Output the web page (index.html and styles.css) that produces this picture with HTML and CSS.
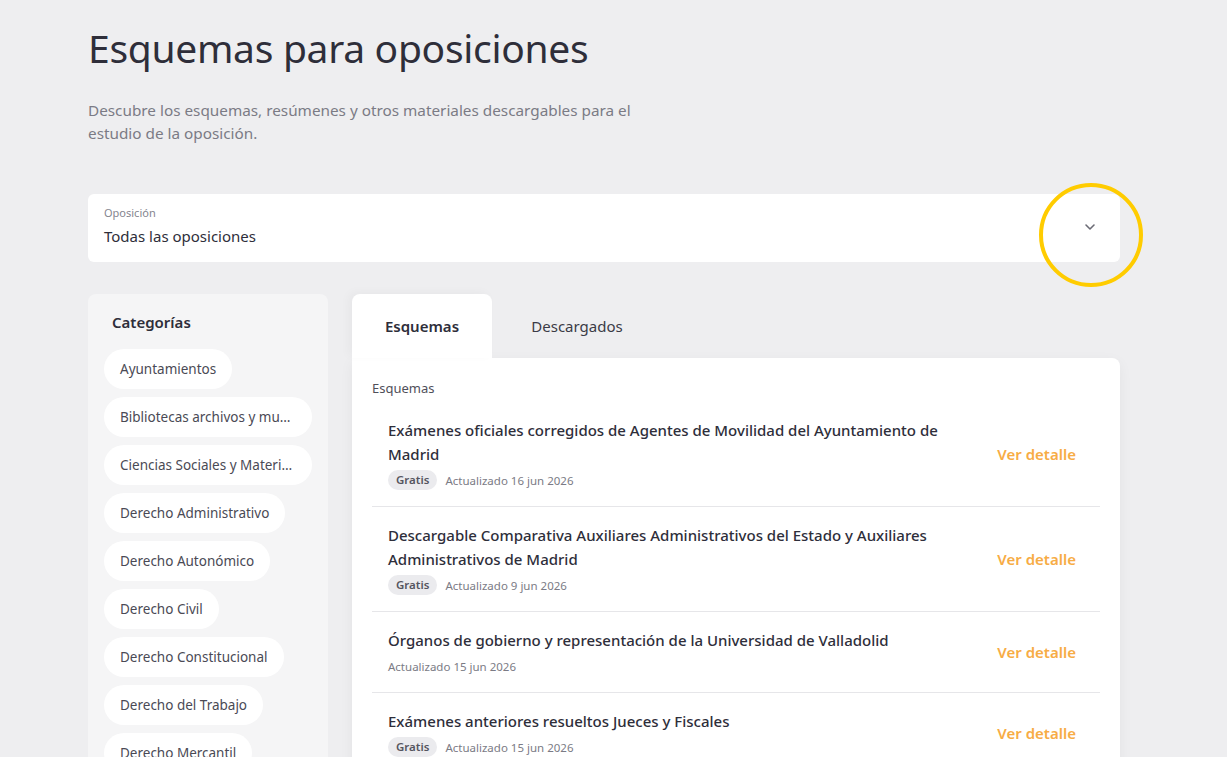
FILE: index.html
```html
<!DOCTYPE html>
<html lang="es">
<head>
  <meta charset="UTF-8">
  <title>Esquemas para oposiciones</title>
  <link rel="stylesheet" href="styles.css">
</head>
<body>
  <div class="page">
    <header class="page-header">
      <h1>Esquemas para oposiciones</h1>
      <p class="intro">Descubre los esquemas, resúmenes y otros materiales descargables para el estudio de la oposición.</p>
    </header>

    <div class="select-box">
      <div class="select-text">
        <span class="select-label">Oposición</span>
        <span class="select-value">Todas las oposiciones</span>
      </div>
      <svg class="chevron" width="12" height="8" viewBox="0 0 12 8">
        <path d="M2 2 L6 6 L10 2" fill="none" stroke="#6b6b75" stroke-width="1.6" stroke-linecap="round" stroke-linejoin="round"/>
      </svg>
      <span class="highlight-ring"></span>
    </div>

    <div class="main">
      <aside class="categories">
        <h3>Categorías</h3>
        <ul class="chips">
          <li class="chip">Ayuntamientos</li>
          <li class="chip">Bibliotecas archivos y museos</li>
          <li class="chip">Ciencias Sociales y Materias afines</li>
          <li class="chip">Derecho Administrativo</li>
          <li class="chip">Derecho Autonómico</li>
          <li class="chip">Derecho Civil</li>
          <li class="chip">Derecho Constitucional</li>
          <li class="chip">Derecho del Trabajo</li>
          <li class="chip">Derecho Mercantil</li>
        </ul>
      </aside>

      <section class="content">
        <div class="tabs">
          <div class="tab active">Esquemas</div>
          <div class="tab">Descargados</div>
        </div>
        <div class="panel">
          <div class="panel-title">Esquemas</div>
          <ul class="items">
            <li class="item">
              <div class="item-info">
                <div class="item-title">Exámenes oficiales corregidos de Agentes de Movilidad del Ayuntamiento de Madrid</div>
                <div class="item-meta"><span class="badge">Gratis</span><span>Actualizado 16 jun 2026</span></div>
              </div>
              <a class="item-link" href="#">Ver detalle</a>
            </li>
            <li class="item">
              <div class="item-info">
                <div class="item-title">Descargable Comparativa Auxiliares Administrativos del Estado y Auxiliares Administrativos de Madrid</div>
                <div class="item-meta"><span class="badge">Gratis</span><span>Actualizado 9 jun 2026</span></div>
              </div>
              <a class="item-link" href="#">Ver detalle</a>
            </li>
            <li class="item">
              <div class="item-info">
                <div class="item-title">Órganos de gobierno y representación de la Universidad de Valladolid</div>
                <div class="item-meta"><span class="date-only">Actualizado 15 jun 2026</span></div>
              </div>
              <a class="item-link" href="#">Ver detalle</a>
            </li>
            <li class="item">
              <div class="item-info">
                <div class="item-title">Exámenes anteriores resueltos Jueces y Fiscales</div>
                <div class="item-meta"><span class="badge">Gratis</span><span>Actualizado 15 jun 2026</span></div>
              </div>
              <a class="item-link" href="#">Ver detalle</a>
            </li>
          </ul>
        </div>
      </section>
    </div>
  </div>
</body>
</html>
```

FILE: styles.css
```css
:root {
  --bg-color: #eeeef0;
  --text-color: #2e2e3a;
  --muted-color: #7b7b85;
  --border-color: #e6e6e9;
  --accent: #f7ac45;
}

body {
  font-family: "Noto Sans", "Open Sans", sans-serif;
  background-color: var(--bg-color);
  color: var(--text-color);
  margin: 0;
  height: 757px;
  overflow: hidden;
}

.page {
  width: 1032px;
  margin-left: 88px;
}

.page-header h1 {
  font-size: 39px;
  font-weight: 400;
  margin: 23px 0 0;
  line-height: 50px;
  letter-spacing: -0.3px;
}

.intro {
  width: 570px;
  margin: 26px 0 0;
  font-size: 15.3px;
  line-height: 23px;
  color: var(--muted-color);
}

.select-box {
  position: relative;
  margin-top: 49px;
  height: 68px;
  background: #fff;
  border-radius: 6px;
  display: flex;
  align-items: center;
  justify-content: space-between;
  padding: 0 24px 0 16px;
  box-sizing: border-box;
}

.select-text {
  display: flex;
  flex-direction: column;
  margin-top: -3px;
}

.select-label {
  font-size: 11px;
  color: #85858f;
  line-height: 14px;
}

.select-value {
  font-size: 15px;
  line-height: 22px;
  margin-top: 5px;
}

.chevron {
  margin-top: -2px;
}

.highlight-ring {
  position: absolute;
  right: -23px;
  top: -11px;
  width: 96px;
  height: 96px;
  border: 4px solid #ffcc00;
  border-radius: 50%;
}

.main {
  display: flex;
  gap: 24px;
  margin-top: 32px;
}

.categories {
  width: 240px;
  flex-shrink: 0;
  background: #f5f5f6;
  border-radius: 8px;
  padding: 17px 16px 0;
  box-sizing: border-box;
}

.categories h3 {
  margin: 0 0 16px 8px;
  font-size: 15px;
  font-weight: 600;
  line-height: 22px;
}

.chips {
  list-style: none;
  margin: 0;
  padding: 0;
  display: flex;
  flex-direction: column;
  align-items: flex-start;
  gap: 8px;
}

.chip {
  background: #fff;
  border-radius: 20px;
  height: 40px;
  line-height: 40px;
  padding: 0 16px;
  font-size: 13.5px;
  color: #4a4a55;
  max-width: 208px;
  box-sizing: border-box;
  white-space: nowrap;
  overflow: hidden;
  text-overflow: ellipsis;
}

.content {
  flex-grow: 1;
}

.tabs {
  display: flex;
  height: 64px;
}

.tab {
  width: 140px;
  display: flex;
  align-items: center;
  justify-content: center;
  font-size: 15px;
  color: #3b3b46;
  margin-right: 14px;
}

.tab.active {
  background: #fff;
  border-radius: 8px 8px 0 0;
  font-weight: 600;
  color: var(--text-color);
  box-shadow: -4px -2px 10px rgba(0, 0, 0, 0.03);
}

.tab + .tab {
  width: 142px;
}

.panel {
  background: #fff;
  border-radius: 0 8px 8px 8px;
  padding: 20px 20px 0;
  box-shadow: 0 4px 14px rgba(0, 0, 0, 0.05);
  height: 420px;
}

.panel-title {
  font-size: 13px;
  line-height: 20px;
  color: #4f4f5a;
  margin-bottom: 4px;
}

.items {
  list-style: none;
  margin: 0;
  padding: 0;
}

.item {
  display: flex;
  align-items: center;
  justify-content: space-between;
  padding: 16px 24px 16px 16px;
  border-bottom: 1px solid var(--border-color);
}

.item-info {
  width: 580px;
}

.item-title {
  font-size: 15px;
  line-height: 24px;
  font-weight: 500;
}

.item-meta {
  display: flex;
  align-items: center;
  gap: 8px;
  margin-top: 4px;
  font-size: 11.5px;
  color: var(--muted-color);
  height: 20px;
}

.badge {
  background: #ebebee;
  color: #55555f;
  font-weight: 600;
  border-radius: 10px;
  padding: 0 8px;
  line-height: 20px;
}

.item-link {
  color: var(--accent);
  font-weight: 600;
  font-size: 15px;
  text-decoration: none;
}
```
